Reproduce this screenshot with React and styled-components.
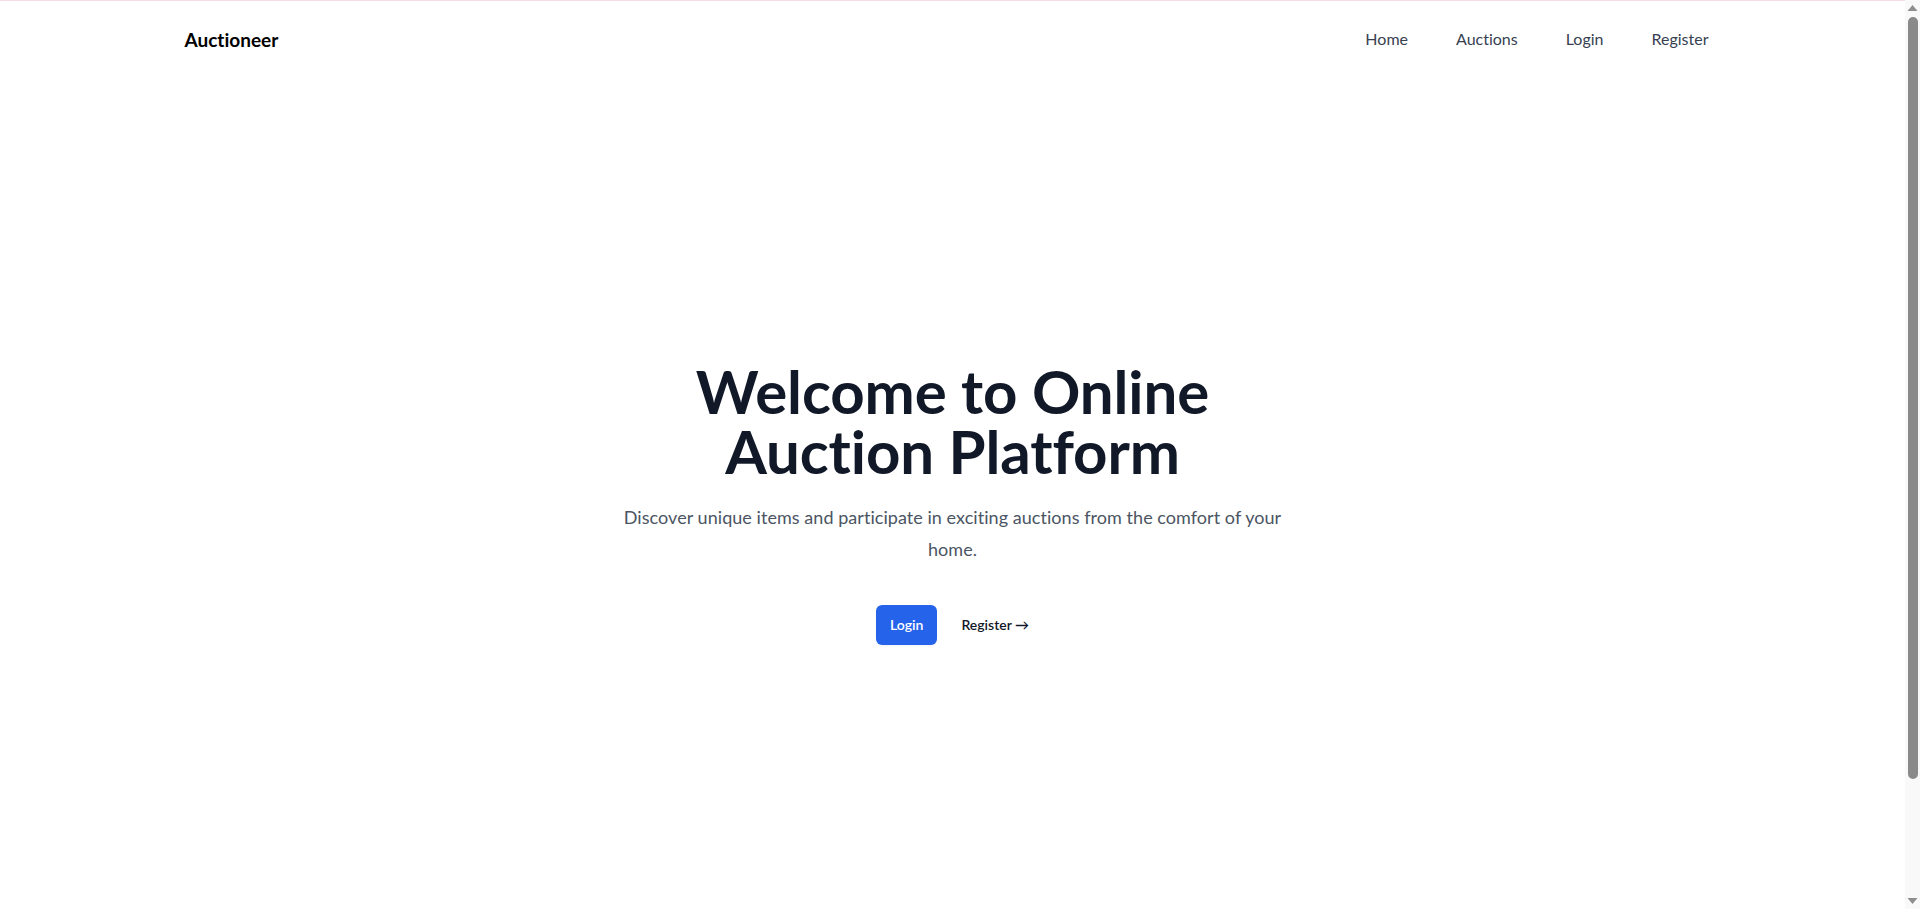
import React from "react";
import styled, { createGlobalStyle } from "styled-components";

const GlobalStyle = createGlobalStyle`
  html, body {
    margin: 0;
    padding: 0;
    background: #ffffff;
  }

  html {
    scrollbar-width: none;
  }

  body {
    font-family: Lato, "Noto Sans", "Liberation Sans", sans-serif;
    font-variant-ligatures: none;
    color: #111827;
    -webkit-font-smoothing: antialiased;
  }

  * {
    box-sizing: border-box;
  }
`;

const navLinks = ["Home", "Auctions", "Login", "Register"];

const App = () => {
  return (
    <>
      <GlobalStyle />
      <Page>
        <Header>
          <HeaderInner>
            <Logo href="#">Auctioneer</Logo>
            <Nav>
              {navLinks.map((link) => (
                <NavLink key={link} href="#">
                  {link}
                </NavLink>
              ))}
            </Nav>
          </HeaderInner>
        </Header>

        <Hero>
          <HeroContent>
            <Title>Welcome to Online Auction Platform</Title>
            <Lead>
              Discover unique items and participate in exciting auctions from
              the comfort of your home.
            </Lead>
            <Actions>
              <PrimaryButton href="#">Login</PrimaryButton>
              <TextLink href="#">
                Register <span aria-hidden="true">→</span>
              </TextLink>
            </Actions>
          </HeroContent>
        </Hero>
      </Page>

      <ScrollTrack aria-hidden="true">
        <svg width="15" height="17" viewBox="0 0 15 17">
          <path d="M2.5 11 L7.5 5 L12.5 11 Z" fill="#8e8e8e" />
        </svg>
        <Thumb />
        <svg width="15" height="17" viewBox="0 0 15 17">
          <path d="M2.5 6 L7.5 12 L12.5 6 Z" fill="#8e8e8e" />
        </svg>
      </ScrollTrack>
    </>
  );
};

const Page = styled.div`
  min-height: 1044px;
  margin-right: 15px;
  border-top: 1px solid #f6dde2;
  background: #ffffff;
`;

const Header = styled.header`
  width: 100%;
`;

const HeaderInner = styled.div`
  max-width: 1536px;
  margin: 0 auto;
  height: 76px;
  display: flex;
  align-items: center;
  justify-content: space-between;
`;

const Logo = styled.a`
  font-size: 19px;
  font-weight: 700;
  color: #000000;
  text-decoration: none;
`;

const Nav = styled.nav`
  display: flex;
  align-items: center;
  gap: 24px;
`;

const NavLink = styled.a`
  padding: 8px 12px;
  font-size: 16px;
  line-height: 24px;
  color: #374151;
  text-decoration: none;
`;

const Hero = styled.main`
  display: flex;
  justify-content: center;
  padding: 284px 24px 0;
`;

const HeroContent = styled.div`
  max-width: 672px;
  text-align: center;
`;

const Title = styled.h1`
  margin: 0;
  font-size: 60px;
  line-height: 60px;
  font-weight: 700;
  letter-spacing: -0.1px;
  color: #111827;
`;

const Lead = styled.p`
  margin: 20px 0 0;
  font-size: 18px;
  line-height: 32px;
  letter-spacing: 0.05px;
  color: #4b5563;
`;

const Actions = styled.div`
  margin-top: 40px;
  display: flex;
  align-items: center;
  justify-content: center;
  gap: 24px;
`;

const PrimaryButton = styled.a`
  display: inline-block;
  padding: 10px 14px;
  border-radius: 6px;
  background: #2563eb;
  color: #ffffff;
  font-size: 14px;
  line-height: 20px;
  font-weight: 600;
  text-decoration: none;
  box-shadow: 0 1px 2px rgba(0, 0, 0, 0.05);
`;

const TextLink = styled.a`
  font-size: 14px;
  line-height: 24px;
  font-weight: 600;
  color: #111827;
  text-decoration: none;
`;

const ScrollTrack = styled.div`
  position: fixed;
  top: 0;
  right: 0;
  width: 15px;
  height: 100vh;
  display: flex;
  flex-direction: column;
  align-items: center;
  background: #f9f9f9;

  svg {
    flex: none;
    display: block;
  }
`;

const Thumb = styled.div`
  width: 10px;
  height: 762px;
  border-radius: 5px;
  background: #8a8a8a;
  margin-bottom: auto;
`;

export default App;
